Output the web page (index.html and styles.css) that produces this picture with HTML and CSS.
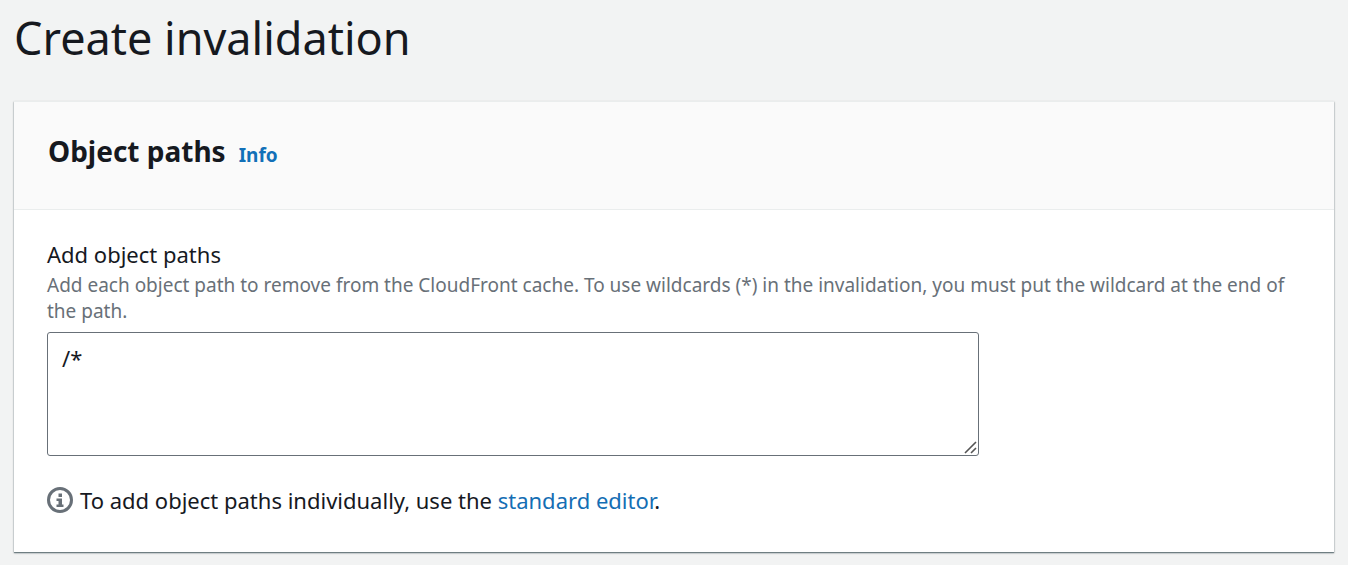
FILE: index.html
```html
<!DOCTYPE html>
<html lang="en">
<head>
<meta charset="utf-8">
<title>Create invalidation</title>
<link rel="stylesheet" href="styles.css">
</head>
<body>
<main class="page">
  <h1 class="page-title">Create invalidation</h1>
  <section class="card">
    <header class="card-header">
      <h2 class="card-title">Object paths</h2>
      <a class="info-link" href="#info">Info</a>
    </header>
    <div class="card-body">
      <label class="field-label" for="paths">Add object paths</label>
      <p class="field-hint" id="paths-hint">Add each object path to remove from the CloudFront cache. To use wildcards (*) in the invalidation, you must put the wildcard at the end of the path.</p>
      <textarea class="field-input" id="paths" aria-describedby="paths-hint">/*</textarea>
      <div class="note">
        <svg class="note-icon" viewBox="0 0 26 26" aria-hidden="true">
          <circle cx="13" cy="13" r="11.5" fill="none" stroke="#687078" stroke-width="3"/>
          <path d="M11.5 6.5h3.500v3.500h-3.500zM9.500 11.500h5.500v6h1.500v2.500H9.500v-2.500h2v-3.500h-2z" fill="#687078"/>
        </svg>
        <p class="note-text">To add object paths individually, use the <a class="link" href="#standard">standard editor</a>.</p>
      </div>
    </div>
  </section>
</main>
</body>
</html>
```
FILE: styles.css
```css
* { box-sizing: border-box; }
body {
  margin: 0;
  background: #f2f3f3;
  color: #16191f;
  font-family: "Noto Sans", "Open Sans", sans-serif;
}
.page { padding: 8px 14px 12px; }
.page-title {
  margin: 0 0 33px;
  font-size: 45px;
  line-height: 60px;
  font-weight: 400;
}
.card {
  background: #fff;
  border-top: 1px solid #eaeded;
  box-shadow: 0 1px 1px rgba(0, 28, 36, 0.4), 0 1px 2px rgba(0, 28, 36, 0.35);
}
.card-header {
  display: flex;
  align-items: baseline;
  gap: 13px;
  padding: 29px 34px 38px;
  background: #fafafa;
  border-bottom: 1px solid #eaeded;
}
.card-title { margin: 0; font-size: 28px; line-height: 40px; font-weight: 700; }
.info-link { color: #1270b8; font-size: 19px; font-weight: 700; text-decoration: none; }
.card-body { padding: 28px 33px 36px; }
.field-label,
.note-text {
  font-size: 22px;
  line-height: 32px;
}
.field-label { display: block; margin-bottom: 2px; }
.field-hint { margin: 0 0 8px; color: #687078; font-size: 19px; line-height: 26px; }
.field-input {
  display: block;
  width: 932px;
  max-width: 100%;
  height: 124px;
  padding: 9px 14px;
  border: 1px solid #687078;
  border-radius: 3px;
  background: #fff;
  color: inherit;
  font: inherit;
  font-size: 22px;
  line-height: 32px;
  resize: both;
}
.field-input::-webkit-resizer {
  background: url("data:image/svg+xml,%3Csvg xmlns='http://www.w3.org/2000/svg' width='15' height='15'%3E%3Cpath d='M2 13L13 2M8 13l5-5' stroke='%23555' stroke-width='1.6'/%3E%3C/svg%3E") no-repeat;
}
.note { display: flex; align-items: center; gap: 7px; margin-top: 28px; }
.note-icon { width: 26px; height: 26px; flex: none; }
.note-text { margin: 0; }
.link { color: #146eb4; text-decoration: none; }
```
